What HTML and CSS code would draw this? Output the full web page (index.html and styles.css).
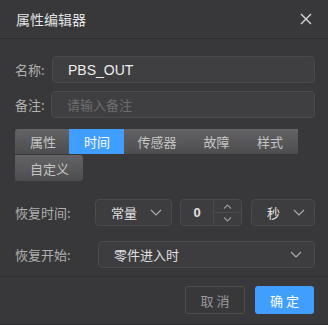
FILE: index.html
```html
<!DOCTYPE html>
<html lang="zh">
<head>
<meta charset="utf-8">
<link rel="stylesheet" href="styles.css">
</head>
<body>
<div class="dialog">
  <div class="header">
    <span class="title">属性编辑器</span>
    <svg class="close" width="12" height="12" viewBox="0 0 12 12"><path d="M1 1L11 11M11 1L1 11" stroke="#d8d8d8" stroke-width="1.4" fill="none"/></svg>
  </div>
  <div class="body">
    <div class="row">
      <span class="label label-short">名称:</span>
      <div class="input"><span class="value">PBS_OUT</span></div>
    </div>
    <div class="row row-remark">
      <span class="label label-short2">备注:</span>
      <div class="input"><span class="placeholder">请输入备注</span></div>
    </div>
    <div class="tabs">
      <span class="tab first">属性</span><span class="tab active">时间</span><span class="tab">传感器</span><span class="tab">故障</span><span class="tab last">样式</span><span class="tab single">自定义</span>
    </div>
    <div class="row row-time">
      <span class="label label-time">恢复时间:</span>
      <div class="select sel-const"><span class="sel-text">常量</span><svg class="chev" width="12" height="7" viewBox="0 0 12 7"><path d="M1 1L6 6L11 1" stroke="#aaa" stroke-width="1.2" fill="none"/></svg></div>
      <div class="number">
        <span class="num-val">0</span>
        <div class="spin">
          <div class="spin-btn up"><svg width="9" height="5" viewBox="0 0 9 5"><path d="M1 4.5L4.5 1L8 4.5" stroke="#999" stroke-width="1.1" fill="none"/></svg></div>
          <div class="spin-btn down"><svg width="9" height="5" viewBox="0 0 9 5"><path d="M1 0.5L4.5 4L8 0.5" stroke="#999" stroke-width="1.1" fill="none"/></svg></div>
        </div>
      </div>
      <div class="select sel-unit"><span class="sel-text">秒</span><svg class="chev" width="12" height="7" viewBox="0 0 12 7"><path d="M1 1L6 6L11 1" stroke="#aaa" stroke-width="1.2" fill="none"/></svg></div>
    </div>
    <div class="row row-start">
      <span class="label label-start">恢复开始:</span>
      <div class="select sel-wide"><span class="sel-text">零件进入时</span><svg class="chev" width="12" height="7" viewBox="0 0 12 7"><path d="M1 1L6 6L11 1" stroke="#aaa" stroke-width="1.2" fill="none"/></svg></div>
    </div>
  </div>
  <div class="footer">
    <span class="btn btn-cancel">取消</span>
    <span class="btn btn-ok">确定</span>
  </div>
</div>
</body>
</html>
```
FILE: styles.css
```css
* { box-sizing: border-box; }
html, body { margin: 0; padding: 0; }
body {
  width: 328px;
  height: 325px;
  background: #38383a;
  font-family: "Liberation Sans", "Noto Sans CJK SC", sans-serif;
  overflow: hidden;
}
.dialog {
  width: 328px;
  height: 325px;
  background: #38383a;
  display: flex;
  flex-direction: column;
  border-bottom: 1px solid #2c2c2e;
}
.header {
  height: 39px;
  border-bottom: 1px solid #2e2e30;
  display: flex;
  align-items: center;
  justify-content: space-between;
  padding: 0 16px 0 16px;
}
.title {
  font-size: 14px;
  color: #e2e2e2;
  font-family: "Noto Sans CJK SC", sans-serif;
  line-height: 1;
  margin-top: -1px;
}
.close { margin-top: -1px; margin-right: 0; }
.body {
  padding: 17px 13px 0 15px;
  display: flex;
  flex-direction: column;
}
.row {
  display: flex;
  align-items: center;
  height: 27px;
}
.row-remark { margin-top: 8px; }
.label {
  font-size: 13px;
  color: #b0b0b0;
  font-family: "Noto Sans CJK SC", sans-serif;
  flex: none;
}
.label-short { width: 37px; }
.label-short2 { width: 36px; }
.label-time { width: 80px; }
.label-start { width: 83px; }
.input {
  flex: 1;
  height: 27px;
  background: #3f3f42;
  border: 1px solid #4a4a4d;
  border-radius: 4px;
  display: flex;
  align-items: center;
  padding-left: 15px;
}
.value {
  font-size: 14px;
  color: #ececec;
}
.placeholder {
  font-size: 13px;
  color: #6e6e70;
  font-family: "Noto Sans CJK SC", sans-serif;
}
.tabs {
  margin-top: 11px;
  display: flex;
  flex-wrap: wrap;
  width: 300px;
}
.tab {
  height: 25px;
  padding: 0 13.5px;
  font-size: 13px;
  font-family: "Noto Sans CJK SC", sans-serif;
  color: #c4c4c4;
  background: linear-gradient(#636365, #4d4d4f);
  display: flex;
  align-items: center;
  line-height: 1;
}
.tab.first { border-top-left-radius: 3px; padding: 0 13px 0 15px; }
.tab.active {
  background: #409eff;
  color: #ffffff;
  padding: 0 14px 0 15px;
}
.tab.last { padding: 0 15px 0 14px; }
.tab.single {
  height: 26px;
  border-radius: 0 0 3px 3px;
  border-top-right-radius: 3px;
  padding: 0 14px 0 15px;
  margin-top: 1px;
}
.row-time { margin-top: 18px; }
.row-start { margin-top: 15px; }
.select {
  height: 27px;
  background: #3d3d40;
  border: 1px solid #4a4a4d;
  border-radius: 4px;
  display: flex;
  align-items: center;
  flex: none;
}
.sel-text {
  font-size: 13px;
  color: #e0e0e0;
  font-family: "Noto Sans CJK SC", sans-serif;
}
.sel-const { width: 77px; padding-left: 15px; }
.sel-const .chev { margin-left: 13px; }
.sel-unit { width: 64px; margin-left: 9px; padding-left: 15px; }
.sel-unit .chev { margin-left: 13px; }
.sel-wide { flex: 1; padding: 0 12px 0 15px; justify-content: space-between; }
.number {
  width: 62px;
  height: 27px;
  margin-left: 8px;
  background: #3d3d40;
  border: 1px solid #4a4a4d;
  border-radius: 4px;
  display: flex;
}
.num-val {
  width: 33px;
  display: flex;
  align-items: center;
  justify-content: center;
  font-size: 13px;
  font-weight: bold;
  color: #e0e0e0;
  border-right: 1px solid #4a4a4d;
}
.spin { flex: 1; display: flex; flex-direction: column; }
.spin-btn {
  flex: 1;
  display: flex;
  align-items: center;
  justify-content: center;
}
.spin-btn.up { border-bottom: 1px solid #4a4a4d; }
.footer {
  margin-top: auto;
  height: 48px;
  border-top: 1px solid #2e2e30;
  display: flex;
  justify-content: flex-end;
  align-items: flex-start;
  padding: 9px 14px 0 0;
  gap: 10px;
}
.btn {
  height: 28px;
  display: flex;
  align-items: center;
  justify-content: center;
  font-size: 13px;
  font-family: "Noto Sans CJK SC", sans-serif;
  letter-spacing: 3px;
  border-radius: 3px;
}
.btn-cancel {
  width: 60px;
  border: 1px solid #4e4e50;
  color: #9a9a9a;
  padding-left: 3px;
}
.btn-ok {
  width: 59px;
  background: #409eff;
  color: #ffffff;
  padding-left: 3px;
}
```
